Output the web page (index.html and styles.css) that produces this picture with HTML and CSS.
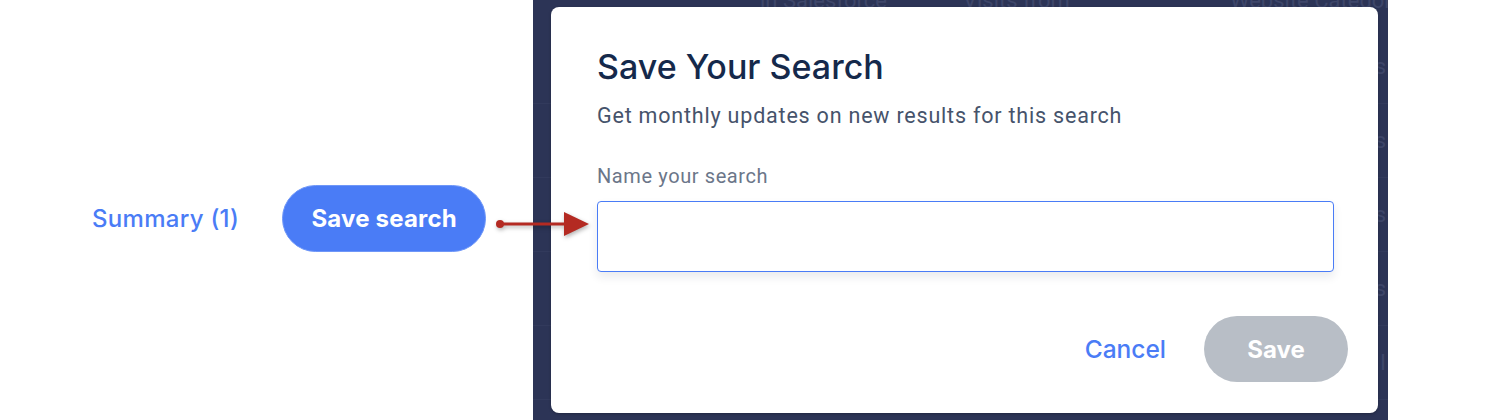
FILE: index.html
```html
<!DOCTYPE html>
<html lang="en">
  <head>
    <meta name="viewport" content="width=device-width, initial-scale=1.0" />
    <title>Save Your Search</title>
    <link rel="stylesheet" href="styles.css">
  </head>
  <body>
    <div class="page">
      <div class="toolbar">
        <a class="summary-link" href="#">Summary (1)</a>
        <button class="save-search">Save search</button>
      </div>

      <div class="overlay">
        <!-- table behind the dimmed backdrop -->
        <div class="backdrop-table">
          <div class="backdrop-head">
            <span class="col col-a">in Salesforce</span>
            <span class="col col-b">Visits from</span>
            <span class="col col-c">Website Category</span>
          </div>
          <div class="backdrop-row"><span>s</span></div>
          <div class="backdrop-row"><span>s</span></div>
          <div class="backdrop-row"><span>s</span></div>
          <div class="backdrop-row"><span>s</span></div>
          <div class="backdrop-row"><span>I</span></div>
        </div>

        <div class="modal">
          <h1 class="modal-title">Save Your Search</h1>
          <p class="modal-subtitle">Get monthly updates on new results for this search</p>

          <label class="field-label" for="search-name">Name your search</label>
          <div class="field-box">
            <input class="field-input" id="search-name" type="text" />
          </div>

          <div class="modal-actions">
            <button class="btn-cancel">Cancel</button>
            <button class="btn-save" disabled>Save</button>
          </div>
        </div>
      </div>

      <!-- annotation arrow -->
      <svg class="pointer" width="100" height="30" viewBox="0 0 100 30">
        <circle cx="4" cy="15" r="4" fill="#b42a22" />
        <rect x="4" y="13.5" width="68" height="3" fill="#b42a22" />
        <polygon points="68,3 93,15 68,27" fill="#b42a22" />
      </svg>
    </div>
  </body>
</html>
```

FILE: styles.css
```css
html,
body {
  margin: 0;
  background: #ffffff;
  font-family: Roboto, "Noto Sans", sans-serif;
}

.page {
  position: relative;
  display: flex;
  height: 420px;
  overflow: hidden;
}

.toolbar {
  width: 533px;
  flex: none;
  display: flex;
  align-items: center;
  gap: 43px;
  padding-left: 92px;
  box-sizing: border-box;
  margin-top: 17px;
}

.summary-link {
  font-family: Inter, sans-serif;
  font-weight: 500;
  font-size: 24px;
  letter-spacing: 0.3px;
  color: #4a7cf6;
  text-decoration: none;
}

.save-search {
  width: 204px;
  height: 67px;
  border: 1px solid #6f97f8;
  border-radius: 34px;
  background: #4a7cf6;
  color: #ffffff;
  font-family: Inter, sans-serif;
  font-weight: 700;
  font-size: 24px;
  letter-spacing: 0.2px;
}

.overlay {
  position: relative;
  width: 855px;
  flex: none;
  background: #2c3456;
  padding: 7px 10px 7px 18px;
  box-sizing: border-box;
}

.backdrop-table {
  position: absolute;
  inset: 0;
  overflow: hidden;
  color: #3e4669;
  font-family: Roboto, sans-serif;
  font-size: 22px;
}

.backdrop-head {
  position: relative;
  height: 30px;
}

.backdrop-head .col {
  position: absolute;
  top: -12px;
  white-space: nowrap;
}

.col-a { left: 227px; }
.col-b { left: 430px; }
.col-c { left: 697px; }

.backdrop-row {
  height: 73px;
  border-bottom: 1px solid #323a5c;
  display: flex;
  align-items: center;
  justify-content: flex-end;
  padding-right: 2px;
}

.modal {
  position: relative;
  height: 406px;
  background: #ffffff;
  border-radius: 8px;
  box-shadow: 0 1px 3px rgba(0, 0, 0, 0.25);
  padding: 40px 44px 0 46px;
  box-sizing: border-box;
  display: flex;
  flex-direction: column;
}

.modal-title {
  margin: 0;
  font-family: Inter, sans-serif;
  font-weight: 500;
  font-size: 34px;
  line-height: 40px;
  color: #15294b;
}

.modal-subtitle {
  margin: 15px 0 0;
  font-size: 21.5px;
  letter-spacing: 0.8px;
  line-height: 28px;
  color: #46536b;
}

.field-label {
  margin-top: 33px;
  font-size: 20px;
  letter-spacing: 0.6px;
  line-height: 26px;
  color: #6b7689;
}

.field-box {
  margin-top: 12px;
  height: 71px;
  border: 1px solid #4a7cf6;
  border-radius: 4px;
  background: #ffffff;
  box-shadow: 0 5px 10px rgba(20, 30, 60, 0.09);
  box-sizing: border-box;
  display: flex;
}

.field-input {
  flex: 1;
  border: 0;
  background: transparent;
  padding: 0 16px;
  font-family: Roboto, sans-serif;
  font-size: 20px;
  outline: none;
}

.modal-actions {
  margin-top: 44px;
  margin-right: -14px;
  display: flex;
  justify-content: flex-end;
  align-items: center;
  gap: 38px;
}

.btn-cancel {
  background: none;
  border: 0;
  padding: 0;
  font-family: Inter, sans-serif;
  font-weight: 500;
  font-size: 24.5px;
  color: #4a7cf6;
}

.btn-save {
  width: 144px;
  height: 66px;
  border: 0;
  border-radius: 33px;
  background: #b8bec6;
  color: #ffffff;
  font-family: Inter, sans-serif;
  font-weight: 700;
  font-size: 24px;
}

.pointer {
  position: absolute;
  left: 496px;
  top: 209px;
  filter: drop-shadow(1px 2px 2px rgba(0, 0, 0, 0.3));
}
```
